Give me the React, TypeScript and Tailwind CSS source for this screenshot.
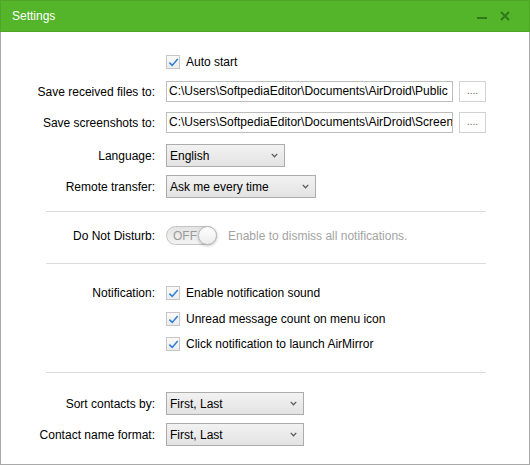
import type { ReactNode } from "react";

const font = { fontFamily: '"Liberation Sans", Arial, sans-serif' };

function Check({ label }: { label: string }) {
  return (
    <div className="flex h-[14px] items-center gap-[6px]">
      <span className="flex h-[14px] w-[14px] shrink-0 items-center justify-center border border-[#c6c6c6] bg-gradient-to-b from-[#fafafa] to-[#ececec]">
        <svg viewBox="0 0 12 12" className="h-[11px] w-[11px]" aria-hidden>
          <path d="M1.5 6.2 L4.6 9.2 L10.6 2.2" fill="none" stroke="#2f7fd6" strokeWidth="1.7" />
        </svg>
      </span>
      <span className="text-[12px] leading-[14px] text-black">{label}</span>
    </div>
  );
}

function Row({ label, children, className = "" }: { label?: string; children: ReactNode; className?: string }) {
  return (
    <div className={`flex items-center ${className}`}>
      <div className="w-[155px] shrink-0 pr-px text-right text-[12px] leading-[14px] text-black">{label}</div>
      <div className="ml-[10px] flex items-center">{children}</div>
    </div>
  );
}

function Select({ value, w }: { value: string; w: string }) {
  return (
    <div
      className={`flex h-[23px] ${w} items-center justify-between border border-[#acacac] bg-gradient-to-b from-[#f2f2f2] to-[#e3e3e3] pl-[3px] pr-[6px] text-[12px] text-black`}
    >
      <span>{value}</span>
      <svg viewBox="0 0 8 6" className="h-[5px] w-[7px]" aria-hidden>
        <path d="M0.7 1 L4 4.5 L7.3 1" fill="none" stroke="#5a5a5a" strokeWidth="1.5" />
      </svg>
    </div>
  );
}

function PathInput({ value }: { value: string }) {
  return (
    <>
      <div className="h-[21px] w-[287px] overflow-hidden whitespace-nowrap border border-[#bdbdbd] bg-white pl-[2px] text-[12px] leading-[19px] text-black">
        {value}
      </div>
      <div className="ml-[6px] flex h-[21px] w-[27px] items-end justify-center border border-[#d2d2d2] bg-white pb-[5px] text-[10px] leading-[10px] text-[#666]">
        ....
      </div>
    </>
  );
}

function Divider({ className = "" }: { className?: string }) {
  return <div className={`ml-[45px] h-px w-[440px] bg-[#dcdcdc] ${className}`} />;
}

export default function App() {
  return (
    <div className="h-[465px] w-[530px] bg-white" style={font}>
      <div className="flex h-[32px] items-center border border-[#4ea526] bg-[#55b52a] pl-[11px] pr-[19px]">
        <span className="text-[12px] text-white">Settings</span>
        <div className="ml-auto flex items-center gap-[13px]">
          <svg viewBox="0 0 10 10" className="h-[10px] w-[10px]" aria-hidden>
            <path d="M0 7 H10" stroke="#2e7a18" strokeWidth="2" />
          </svg>
          <svg viewBox="0 0 10 10" className="h-[10px] w-[10px]" aria-hidden>
            <path d="M1 1 L9 9 M9 1 L1 9" stroke="#2e7a18" strokeWidth="2" />
          </svg>
        </div>
      </div>
      <div className="flex h-[433px] flex-col border-x border-b border-[#a9a9a9]">
        <Row className="mt-[23px]">
          <Check label="Auto start" />
        </Row>
        <Row label="Save received files to:" className="mt-[12px]">
          <PathInput value="C:\Users\SoftpediaEditor\Documents\AirDroid\Public" />
        </Row>
        <Row label="Save screenshots to:" className="mt-[10px]">
          <PathInput value="C:\Users\SoftpediaEditor\Documents\AirDroid\Screenshots" />
        </Row>
        <Row label="Language:" className="mt-[11px]">
          <Select value="English" w="w-[119px]" />
        </Row>
        <Row label="Remote transfer:" className="mt-[8px]">
          <Select value="Ask me every time" w="w-[150px]" />
        </Row>
        <Divider className="mt-[13px]" />
        <Row label="Do Not Disturb:" className="mt-[14px]">
          <div className="flex h-[19px] w-[51px] items-center rounded-full border border-[#c4c4c4] bg-gradient-to-b from-[#e4e4e4] to-[#f3f3f3] pl-[6px]">
            <span className="text-[12px] text-[#9a9a9a]">OFF</span>
            <span className="ml-auto -mr-px h-[19px] w-[19px] rounded-full border border-[#b9b9b9] bg-gradient-to-b from-white to-[#ececec] shadow-[0_1px_3px_rgba(0,0,0,0.25)]" />
          </div>
          <span className="ml-[11px] text-[12px] text-[#a3a3a3]">Enable to dismiss all notifications.</span>
        </Row>
        <Divider className="mt-[18px]" />
        <Row label="Notification:" className="mt-[22px]">
          <Check label="Enable notification sound" />
        </Row>
        <Row className="mt-[12px]">
          <Check label="Unread message count on menu icon" />
        </Row>
        <Row className="mt-[11px]">
          <Check label="Click notification to launch AirMirror" />
        </Row>
        <Divider className="mt-[21px]" />
        <Row label="Sort contacts by:" className="mt-[19px]">
          <Select value="First, Last" w="w-[138px]" />
        </Row>
        <Row label="Contact name format:" className="mt-[8px]">
          <Select value="First, Last" w="w-[138px]" />
        </Row>
      </div>
    </div>
  );
}
